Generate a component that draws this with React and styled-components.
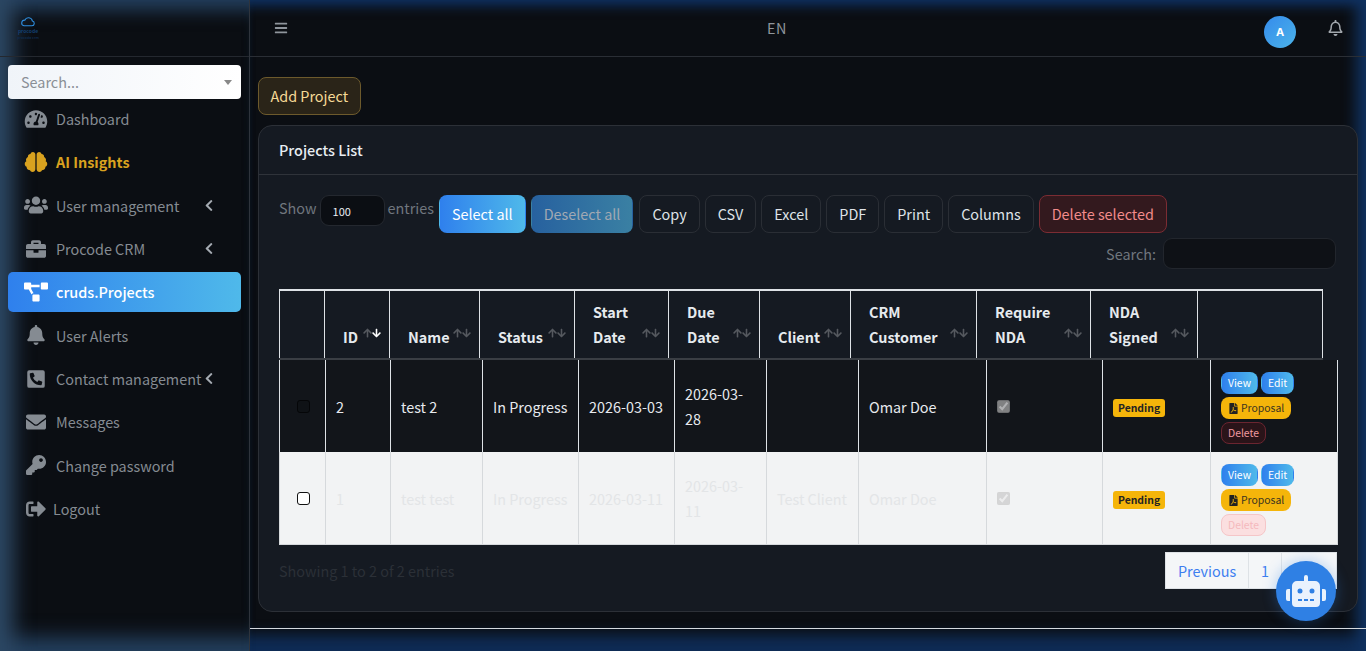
import React from "react";
import styled, { createGlobalStyle } from "styled-components";
import {
  FaArrowDown,
  FaArrowUp,
  FaBars,
  FaBell,
  FaBrain,
  FaBriefcase,
  FaChevronLeft,
  FaEnvelope,
  FaFilePdf,
  FaKey,
  FaPhoneSquareAlt,
  FaProjectDiagram,
  FaRegBell,
  FaRobot,
  FaSignOutAlt,
  FaTachometerAlt,
  FaUsers,
} from "react-icons/fa";

const GlobalStyle = createGlobalStyle`
  html, body {
    margin: 0;
    height: 100%;
    overflow: hidden;
    background: #0b2a55;
  }
  body, button, input, select {
    font-family: "Noto Sans CJK JP", "Noto Sans", sans-serif;
    font-size: 14.4px;
  }
`;

const Shell = styled.div`
  display: grid;
  grid-template-columns: 250px 1fr;
  height: 651px;
  background: #0b0e13;
`;

const Sidebar = styled.aside`
  display: flex;
  flex-direction: column;
  border-right: 1px solid #2f343c;
  box-shadow: inset 34px 0 20px -20px #2c4763, inset 0 24px 18px -14px #24405f,
    inset 0 -30px 20px -16px #24405f;
`;

const Brand = styled.div`
  height: 57px;
  box-sizing: border-box;
  padding: 16px 0 0 16px;
  border-bottom: 1px solid #24282f;
  svg {
    display: block;
    margin-left: 4px;
  }
`;

const BrandText = styled.div`
  width: 24px;
  margin-top: 1px;
  font-size: ${(p) => (p.$dim ? "3.5px" : "5px")};
  line-height: 6px;
  color: ${(p) => (p.$dim ? "#0f2a4a" : "#134073")};
  text-align: center;
  font-weight: 700;
  white-space: nowrap;
`;

const SearchSelect = styled.div`
  display: flex;
  align-items: center;
  justify-content: space-between;
  height: 34px;
  box-sizing: border-box;
  margin: 8px 8px 0;
  padding: 0 9px 2px 13px;
  background: linear-gradient(90deg, #f0f4f9, #ffffff);
  border-radius: 4px;
  color: #8a8f96;
`;

const Caret = styled.span`
  width: 0;
  height: 0;
  margin-top: 2px;
  border-left: 4px solid transparent;
  border-right: 4px solid transparent;
  border-top: 5px solid #888;
`;

const Nav = styled.nav`
  display: flex;
  flex-direction: column;
  padding: 0 8px;
  margin-top: -2px;
`;

const NavItem = styled.a`
  display: flex;
  align-items: center;
  height: ${(p) => (p.$active ? "40px" : "43.33px")};
  margin: ${(p) => (p.$active ? "1.66px 0" : "0")};
  padding-left: 16px;
  border-radius: 5px;
  color: ${(p) => (p.$active ? "#fff" : p.$gold ? "#d9a21f" : "#858b92")};
  font-weight: ${(p) => (p.$active ? 500 : p.$gold ? 700 : 400)};
  background: ${(p) =>
    p.$active ? "linear-gradient(90deg, #2f80ed, #4fb9ea)" : "transparent"};
  svg.lead {
    width: 24px;
    height: 20px;
    flex: none;
  }
`;

const NavLabel = styled.span`
  margin-left: ${(p) => (p.$tight ? "5px" : "8px")};
  width: ${(p) => (p.$grow ? "148px" : "auto")};
  white-space: nowrap;
`;

const Chevron = styled(FaChevronLeft)`
  width: 10px;
  height: 13px;
  color: #a5abb2;
`;

const Main = styled.main`
  display: flex;
  flex-direction: column;
  min-width: 0;
  box-shadow: inset -18px 0 14px -8px #10315f, inset 0 14px 12px -8px #10315f,
    inset 0 -26px 14px -10px #0f2c55;
`;

const Topbar = styled.header`
  display: grid;
  grid-template-columns: 493px auto 1fr;
  align-items: center;
  height: 57px;
  box-sizing: border-box;
  padding: 0 23px 0 24px;
  border-bottom: 1px solid #2a2e35;
  color: #8f959c;
`;

const TopRight = styled.div`
  display: flex;
  justify-content: flex-end;
  align-items: center;
  gap: 32px;
`;

const Lang = styled.span`
  letter-spacing: 0.4px;
  margin-bottom: 2px;
`;

const Avatar = styled.div`
  width: 32px;
  height: 32px;
  margin-top: 8px;
  border-radius: 50%;
  display: flex;
  align-items: center;
  justify-content: center;
  background: linear-gradient(135deg, #358bec, #4bb3e9);
  color: #fff;
  font-size: 11px;
  font-weight: 700;
  font-family: "Inter", sans-serif;
`;

const BellBtn = styled(FaRegBell)`
  width: 15px;
  height: 16px;
  color: #a2a7ad;
`;

const Content = styled.div`
  flex: 1;
  padding: 20px 8px 0;
`;

const AddButton = styled.button`
  display: block;
  height: 38px;
  padding: 0 11.5px;
  border: 1px solid #6d5a2c;
  border-radius: 8px;
  background: #2a2418;
  color: #f6da96;
  line-height: 1;
`;

const Card = styled.section`
  margin-top: 10px;
  height: 487px;
  box-sizing: border-box;
  border: 1px solid #2c3037;
  border-radius: 14px;
  background: #151a22;
`;

const CardHead = styled.div`
  height: 49px;
  padding: 12px 20px 0;
  box-sizing: border-box;
  border-bottom: 1px solid #2f333a;
  color: #e8edf2;
  font-weight: 500;
  line-height: 24px;
`;

const CardBody = styled.div`
  padding: 20px 20px 0;
  color: #70767e;
`;

const Toolbar = styled.div`
  display: flex;
  align-items: flex-start;
`;

const LenLabel = styled.label`
  display: flex;
  align-items: flex-start;
  gap: 3px;
  line-height: 26px;
  margin-right: 5px;
`;

const LenSelect = styled.div`
  width: 65px;
  height: 31px;
  box-sizing: border-box;
  padding-left: 12px;
  border: 1px solid #24282f;
  border-radius: 9px;
  background: #0b0e13;
  color: #e8edf2;
  font-size: 11px;
  line-height: 30px;
`;

const Buttons = styled.div`
  display: flex;
  gap: 5px;
`;

const ToolButton = styled.button`
  height: 38px;
  padding: 0 12px;
  margin-left: ${(p) => (p.$spaced ? "1px" : "0")};
  border-radius: 8px;
  line-height: 1;
  border: 1px solid
    ${(p) =>
      p.$kind === "primary" || p.$kind === "muted"
        ? "transparent"
        : p.$kind === "danger"
          ? "#7b2c33"
          : "#2a2e35"};
  background: ${(p) =>
    p.$kind === "primary"
      ? "linear-gradient(90deg, #2f80ed, #4fb9ea)"
      : p.$kind === "muted"
        ? "linear-gradient(90deg, #27619f, #3a80a3)"
        : p.$kind === "danger"
          ? "#33191e"
          : "transparent"};
  color: ${(p) =>
    p.$kind === "primary"
      ? "#fff"
      : p.$kind === "muted"
        ? "#a1a9b3"
        : p.$kind === "danger"
          ? "#f28b8b"
          : "#dfe3e8"};
`;

const SearchRow = styled.div`
  display: flex;
  justify-content: flex-end;
  align-items: center;
  gap: 7px;
  height: 31px;
  margin: 5px 1px 0 0;
`;

const SearchInput = styled.div`
  width: 173px;
  height: 31px;
  box-sizing: border-box;
  border: 1px solid #22262d;
  border-radius: 9px;
  background: #0e1116;
`;

const Grid = styled.table`
  border-collapse: collapse;
  table-layout: fixed;
  width: ${(p) => p.$width}px;
`;

const HeadGrid = styled(Grid)`
  margin-top: 20px;
  border-top: 2px solid #dee2e6;
`;

const Th = styled.th`
  position: relative;
  height: 69px;
  box-sizing: border-box;
  padding: 0 0 9px 18px;
  border: 1px solid #dee2e6;
  border-top: none;
  border-bottom: 2px solid #3a3e44;
  vertical-align: bottom;
  text-align: left;
  color: #e6eaee;
  font-weight: 700;
  line-height: 25px;
`;

const SortArrows = styled.span`
  position: absolute;
  right: 8px;
  bottom: 20px;
  display: flex;
  svg {
    width: 9px;
    height: 10px;
    color: #55595f;
  }
  svg.on {
    color: #fff;
  }
`;

const Td = styled.td`
  height: 92px;
  box-sizing: border-box;
  padding: 8px 9px 8px 10px;
  border: 1px solid ${(p) => (p.$light ? "#d6d9dc" : "#dee2e6")};
  border-top: none;
  border-bottom: ${(p) => (p.$light ? "1px solid #d6d9dc" : "none")};
  background: ${(p) => (p.$light ? "#f2f3f4" : "#12151a")};
  color: ${(p) => (p.$light ? "#e3e5e7" : "#e7eaee")};
  line-height: 25px;
  vertical-align: middle;
`;

const RowCheck = styled.input`
  appearance: none;
  display: block;
  width: 13px;
  height: 13px;
  margin: 0 auto;
  box-sizing: border-box;
  border-radius: 3px;
  border: 1px solid ${(p) => (p.$light ? "#111" : "#050608")};
  background: ${(p) => (p.$light ? "#fff" : "#0f1216")};
`;

const NdaCheck = styled.input`
  display: block;
  width: 13px;
  height: 13px;
  margin: 0;
  opacity: 0.8;
`;

const Badge = styled.span`
  display: block;
  width: fit-content;
  margin-top: 4px;
  padding: 0 5px;
  border-radius: 3px;
  background: #f5b50a;
  color: #232323;
  font-size: 10.4px;
  font-weight: 700;
  line-height: 18px;
`;

const Actions = styled.div`
  display: flex;
  flex-wrap: wrap;
  gap: 3px;
  width: 78px;
  margin-top: 4px;
`;

const ActionBtn = styled.a`
  display: flex;
  align-items: center;
  gap: 2px;
  height: 22px;
  box-sizing: border-box;
  padding: 0 6px;
  border-radius: 8px;
  font-size: 10.4px;
  line-height: 1;
  white-space: nowrap;
  border: 1px solid
    ${(p) =>
      p.$kind === "danger" ? (p.$light ? "#f5c6c8" : "#6b2530") : "transparent"};
  background: ${(p) =>
    p.$kind === "info"
      ? "linear-gradient(90deg, #2f80ed, #4fb9ea)"
      : p.$kind === "warn"
        ? "#f5b50a"
        : p.$light
          ? "#fbdfe0"
          : "#2a1419"};
  color: ${(p) =>
    p.$kind === "info"
      ? "#fff"
      : p.$kind === "warn"
        ? "#3a3320"
        : p.$light
          ? "#f5b9bd"
          : "#ef9aa0"};
`;

const Foot = styled.div`
  display: flex;
  justify-content: space-between;
  align-items: flex-start;
  margin-top: 7px;
`;

const Info = styled.div`
  color: #2b3037;
  line-height: 24px;
  margin-top: 7px;
`;

const Pager = styled.div`
  display: flex;
  height: 37px;
  background: #f4f6f8;
  border: 1px solid #dee2e6;
  box-sizing: border-box;
`;

const PageLink = styled.a`
  padding: 0 12px;
  line-height: 35px;
  color: #3d7ef0;
  border-left: ${(p) => (p.$first ? "none" : "1px solid #dee2e6")};
  width: ${(p) => p.$w}px;
  box-sizing: border-box;
`;

const FooterLine = styled.div`
  height: 1px;
  margin: 16px -8px 0;
  background: #d5d9de;
`;

const ChatButton = styled.button`
  position: fixed;
  left: 1276px;
  top: 561px;
  width: 60px;
  height: 60px;
  border: none;
  border-radius: 50%;
  background: #2f80e4;
  box-shadow: 0 0 14px rgba(47, 128, 228, 0.35);
  color: #e9f2fd;
  display: flex;
  align-items: center;
  justify-content: center;
  padding: 0;
  svg {
    width: 40px;
    height: 32px;
  }
`;

const menu = [
  { label: "Dashboard", icon: FaTachometerAlt },
  { label: "AI Insights", icon: FaBrain, gold: true },
  { label: "User management", icon: FaUsers, chevron: true },
  { label: "Procode CRM", icon: FaBriefcase, chevron: true },
  { label: "cruds.Projects", icon: FaProjectDiagram, active: true },
  { label: "User Alerts", icon: FaBell },
  { label: "Contact management", icon: FaPhoneSquareAlt, chevron: true },
  { label: "Messages", icon: FaEnvelope },
  { label: "Change password", icon: FaKey },
  { label: "Logout", icon: FaSignOutAlt, tight: true },
];

const headCols = [45, 65, 90, 95, 94, 91, 91, 126, 114, 107, 125];
const bodyCols = [46, 65, 92, 96, 96, 92, 92, 128, 116, 108, 127];

const heads = [
  { title: "", noSort: true },
  { title: "ID", on: true },
  { title: "Name" },
  { title: "Status" },
  { title: ["Start", "Date"] },
  { title: ["Due", "Date"] },
  { title: "Client" },
  { title: ["CRM", "Customer"] },
  { title: ["Require", "NDA"] },
  { title: ["NDA", "Signed"] },
  { title: "", noSort: true },
];

const rows = [
  {
    id: 2,
    name: "test 2",
    status: "In Progress",
    start: "2026-03-03",
    due: "2026-03-28",
    client: "",
    customer: "Omar Doe",
  },
  {
    id: 1,
    name: "test test",
    status: "In Progress",
    start: "2026-03-11",
    due: "2026-03-11",
    client: "Test Client",
    customer: "Omar Doe",
    light: true,
  },
];

function CloudLogo() {
  return (
    <svg width="16" height="11" viewBox="0 0 24 16" fill="none">
      <path
        d="M6 14.5h12a3.6 3.6 0 0 0 .6-7.1A6 6 0 0 0 7.2 6 4.3 4.3 0 0 0 6 14.5z"
        stroke="#2f8fe0"
        strokeWidth="1.6"
      />
    </svg>
  );
}

function App() {
  return (
    <>
      <GlobalStyle />
      <Shell>
        <Sidebar>
          <Brand>
            <CloudLogo />
            <BrandText>procode</BrandText>
            <BrandText $dim>procode crm</BrandText>
          </Brand>
          <SearchSelect>
            Search...
            <Caret />
          </SearchSelect>
          <Nav>
            {menu.map((item) => {
              const Icon = item.icon;
              return (
                <NavItem
                  key={item.label}
                  $active={item.active}
                  $gold={item.gold}
                >
                  <Icon className="lead" />
                  <NavLabel $grow={item.chevron} $tight={item.tight}>
                    {item.label}
                  </NavLabel>
                  {item.chevron && <Chevron />}
                </NavItem>
              );
            })}
          </Nav>
        </Sidebar>
        <Main>
          <Topbar>
            <FaBars size={14} />
            <Lang>EN</Lang>
            <TopRight>
              <Avatar>A</Avatar>
              <BellBtn />
            </TopRight>
          </Topbar>
          <Content>
            <AddButton>Add Project</AddButton>
            <Card>
              <CardHead>Projects List</CardHead>
              <CardBody>
                <Toolbar>
                  <LenLabel>
                    Show <LenSelect>100</LenSelect> entries
                  </LenLabel>
                  <Buttons>
                    <ToolButton $kind="primary">Select all</ToolButton>
                    <ToolButton $kind="muted">Deselect all</ToolButton>
                    <ToolButton $spaced>Copy</ToolButton>
                    <ToolButton>CSV</ToolButton>
                    <ToolButton>Excel</ToolButton>
                    <ToolButton>PDF</ToolButton>
                    <ToolButton>Print</ToolButton>
                    <ToolButton>Columns</ToolButton>
                    <ToolButton $kind="danger">Delete selected</ToolButton>
                  </Buttons>
                </Toolbar>
                <SearchRow>
                  Search:
                  <SearchInput />
                </SearchRow>
                <HeadGrid $width={1043}>
                  <colgroup>
                    {headCols.map((w, i) => (
                      <col key={i} width={w} />
                    ))}
                  </colgroup>
                  <thead>
                    <tr>
                      {heads.map((h, i) => (
                        <Th key={i}>
                          {Array.isArray(h.title)
                            ? h.title.map((t) => <div key={t}>{t}</div>)
                            : h.title}
                          {!h.noSort && (
                            <SortArrows>
                              <FaArrowUp />
                              <FaArrowDown className={h.on ? "on" : ""} />
                            </SortArrows>
                          )}
                        </Th>
                      ))}
                    </tr>
                  </thead>
                </HeadGrid>
                <Grid $width={1058}>
                  <colgroup>
                    {bodyCols.map((w, i) => (
                      <col key={i} width={w} />
                    ))}
                  </colgroup>
                  <tbody>
                    {rows.map((r) => (
                      <tr key={r.id}>
                        <Td $light={r.light}>
                          <RowCheck type="checkbox" $light={r.light} />
                        </Td>
                        <Td $light={r.light}>{r.id}</Td>
                        <Td $light={r.light}>{r.name}</Td>
                        <Td $light={r.light}>{r.status}</Td>
                        <Td $light={r.light}>{r.start}</Td>
                        <Td $light={r.light}>{r.due}</Td>
                        <Td $light={r.light}>{r.client}</Td>
                        <Td $light={r.light}>{r.customer}</Td>
                        <Td $light={r.light}>
                          <NdaCheck type="checkbox" checked disabled readOnly />
                        </Td>
                        <Td $light={r.light}>
                          <Badge>Pending</Badge>
                        </Td>
                        <Td $light={r.light}>
                          <Actions>
                            <ActionBtn $kind="info">View</ActionBtn>
                            <ActionBtn $kind="info">Edit</ActionBtn>
                            <ActionBtn $kind="warn">
                              <FaFilePdf size={11} color="#222" />
                              Proposal
                            </ActionBtn>
                            <ActionBtn $kind="danger" $light={r.light}>
                              Delete
                            </ActionBtn>
                          </Actions>
                        </Td>
                      </tr>
                    ))}
                  </tbody>
                </Grid>
                <Foot>
                  <Info>Showing 1 to 2 of 2 entries</Info>
                  <Pager>
                    <PageLink $first $w={82}>
                      Previous
                    </PageLink>
                    <PageLink $w={33}>1</PageLink>
                    <PageLink $w={55}>Next</PageLink>
                  </Pager>
                </Foot>
              </CardBody>
            </Card>
            <FooterLine />
          </Content>
        </Main>
      </Shell>
      <ChatButton aria-label="Chat">
        <FaRobot />
      </ChatButton>
    </>
  );
}

export default App;
